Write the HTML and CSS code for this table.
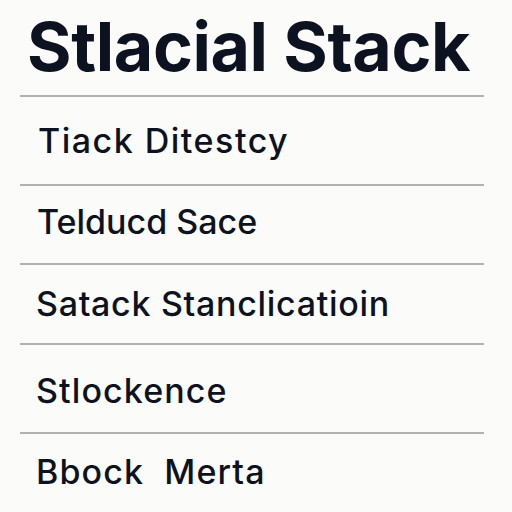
FILE: index.html
```html
<!DOCTYPE html>
<html>
<head>
<meta charset="utf-8">
<link rel="stylesheet" href="styles.css">
</head>
<body>
<main class="page">
  <header class="head">
    <h1 class="title">Stlacial Stack</h1>
  </header>
  <ul class="list">
    <li class="row row-tall"><span class="label label-first">Tiack Ditestcy</span></li>
    <li class="row row-up"><span class="label label-tight">Telducd Sace</span></li>
    <li class="row row-mid"><span class="label label-long">Satack Stanclicatioin</span></li>
    <li class="row row-tall row-down"><span class="label">Stlockence</span></li>
    <li class="row row-last"><span class="label">Bbock&nbsp; Merta</span></li>
  </ul>
</main>
</body>
</html>
```

FILE: styles.css
```css
html, body {
  margin: 0;
  padding: 0;
  background: #fbfbfa;
}
.page {
  width: 512px;
  height: 512px;
  overflow: hidden;
  padding: 0 28px 0 20px;
  box-sizing: border-box;
  font-family: "Inter", "Noto Sans", sans-serif;
  color: #0d1221;
}
.head {
  height: 95px;
  box-sizing: border-box;
  padding: 12px 0 0 7px;
}
.title {
  margin: 0;
  font-size: 68px;
  font-weight: 700;
  letter-spacing: -0.4px;
  line-height: 1;
}
.list {
  list-style: none;
  margin: 0;
  padding: 0;
}
.row {
  box-sizing: border-box;
  height: 79px;
  border-top: 2px solid #b2b2b2;
  display: flex;
  align-items: center;
  padding-left: 16px;
}
.row-tall {
  height: 89px;
}
.row-mid {
  height: 80px;
}
.row-up {
  padding-bottom: 6px;
}
.row-down {
  padding-top: 4px;
}
.row-last {
  height: 80px;
  align-items: flex-start;
  padding-top: 21px;
}
.label {
  font-size: 34px;
  font-weight: 500;
  letter-spacing: 1.1px;
  line-height: 1;
}
.label-first {
  padding-left: 2px;
  letter-spacing: 1.5px;
}
.label-tight {
  padding-left: 1px;
  letter-spacing: 0;
}
.label-long {
  letter-spacing: 0.7px;
}
```
